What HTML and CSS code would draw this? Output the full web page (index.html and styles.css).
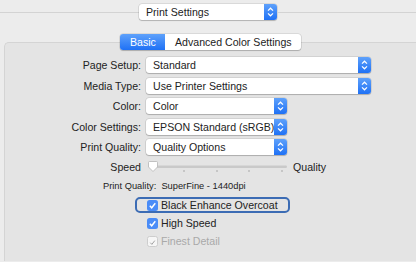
FILE: index.html
```html
<!DOCTYPE html>
<html lang="en-US">
<head>
<title>Print Settings</title>
<link rel="stylesheet" href="styles.css">
</head>
<body>
<div class="topbar">
  <span class="rule"></span>
  <div class="popup top">
    <span class="value">Print Settings</span>
    <span class="stepper"><svg width="13" height="16" viewBox="0 0 13 16"><path d="M4 6.6 L6.5 4.2 L9 6.6 M4 9.4 L6.5 11.8 L9 9.4" fill="none" stroke="#fff" stroke-width="1.2"/></svg></span>
  </div>
  <span class="rule"></span>
</div>

<div class="group">
  <div class="tabs">
    <span class="tab active">Basic</span>
    <span class="tab">Advanced Color Settings</span>
  </div>

  <div class="form">
    <span class="label">Page Setup:</span>
    <div class="popup wide">
      <span class="value">Standard</span>
      <span class="stepper"><svg width="13" height="16" viewBox="0 0 13 16"><path d="M4 6.6 L6.5 4.2 L9 6.6 M4 9.4 L6.5 11.8 L9 9.4" fill="none" stroke="#fff" stroke-width="1.2"/></svg></span>
    </div>

    <span class="label">Media Type:</span>
    <div class="popup wide">
      <span class="value">Use Printer Settings</span>
      <span class="stepper"><svg width="13" height="16" viewBox="0 0 13 16"><path d="M4 6.6 L6.5 4.2 L9 6.6 M4 9.4 L6.5 11.8 L9 9.4" fill="none" stroke="#fff" stroke-width="1.2"/></svg></span>
    </div>

    <span class="label">Color:</span>
    <div class="popup narrow">
      <span class="value">Color</span>
      <span class="stepper"><svg width="13" height="16" viewBox="0 0 13 16"><path d="M4 6.6 L6.5 4.2 L9 6.6 M4 9.4 L6.5 11.8 L9 9.4" fill="none" stroke="#fff" stroke-width="1.2"/></svg></span>
    </div>

    <span class="label">Color Settings:</span>
    <div class="popup narrow">
      <span class="value">EPSON Standard (sRGB)</span>
      <span class="stepper"><svg width="13" height="16" viewBox="0 0 13 16"><path d="M4 6.6 L6.5 4.2 L9 6.6 M4 9.4 L6.5 11.8 L9 9.4" fill="none" stroke="#fff" stroke-width="1.2"/></svg></span>
    </div>

    <span class="label">Print Quality:</span>
    <div class="popup narrow">
      <span class="value">Quality Options</span>
      <span class="stepper"><svg width="13" height="16" viewBox="0 0 13 16"><path d="M4 6.6 L6.5 4.2 L9 6.6 M4 9.4 L6.5 11.8 L9 9.4" fill="none" stroke="#fff" stroke-width="1.2"/></svg></span>
    </div>

    <span class="label">Speed</span>
    <div class="slider-row">
      <svg class="slider" width="141" height="14" viewBox="0 0 141 14">
        <rect x="4" y="5.5" width="137" height="2.5" rx="1.25" fill="#c9c9c9"/>
        <rect x="37.5" y="10" width="1" height="2" fill="#a8a8a8"/>
        <rect x="70.5" y="10" width="1" height="2" fill="#a8a8a8"/>
        <rect x="102.5" y="10" width="1" height="2" fill="#a8a8a8"/>
        <rect x="135.5" y="10" width="1" height="2" fill="#a8a8a8"/>
        <path d="M2.5 2.5 Q2.5 1.5 3.5 1.5 L10.5 1.5 Q11.5 1.5 11.5 2.5 L11.5 7 L7 11.5 L2.5 7 Z" fill="#fff" stroke="#b4b4b4" stroke-width="0.8"/>
      </svg>
      <span class="end-label">Quality</span>
    </div>
  </div>

  <p class="info">Print Quality:&nbsp; SuperFine - 1440dpi</p>

  <div class="checks">
    <div class="check focused">
      <span class="box on"><svg width="11" height="11" viewBox="0 0 11 11"><path d="M2.8 5.7 L4.7 7.8 L8.3 3.2" fill="none" stroke="#fff" stroke-width="1.4"/></svg></span>
      <span>Black Enhance Overcoat</span>
    </div>
    <div class="check">
      <span class="box on"><svg width="11" height="11" viewBox="0 0 11 11"><path d="M2.8 5.7 L4.7 7.8 L8.3 3.2" fill="none" stroke="#fff" stroke-width="1.4"/></svg></span>
      <span>High Speed</span>
    </div>
    <div class="check disabled">
      <span class="box off"><svg width="11" height="11" viewBox="0 0 11 11"><path d="M2.8 5.7 L4.7 7.8 L8.3 3.2" fill="none" stroke="#a0a0a0" stroke-width="1.2"/></svg></span>
      <span>Finest Detail</span>
    </div>
  </div>
</div>
</body>
</html>
```

FILE: styles.css
```css
body {
	margin: 0;
	background-color: #ececec;
	font-family: "Liberation Sans", Arial, sans-serif;
	font-size: 10.6px;
	color: #222;
	overflow: hidden;
	height: 262px;
	}

.topbar {
	display: flex;
	align-items: center;
	padding-top: 4px;
	}
.rule {
	flex: 1;
	height: 1px;
	background-color: #d3d3d3;
	}

.popup {
	display: flex;
	align-items: center;
	height: 16px;
	background-color: #fff;
	border-radius: 3px;
	box-shadow: 0 0 0 0.5px rgba(0,0,0,0.16), 0 1px 1px rgba(0,0,0,0.18);
	box-sizing: border-box;
	}
.popup .value {
	flex: 1;
	padding-left: 7px;
	white-space: nowrap;
	overflow: hidden;
	}
.popup .stepper {
	display: flex;
	width: 13px;
	height: 16px;
	border-radius: 0 3px 3px 0;
	background: linear-gradient(#5ea1fb, #1f71f5);
	}
.popup.top {
	width: 138px;
	}
.popup.wide {
	width: 225px;
	}
.popup.narrow {
	width: 141px;
	}

.group {
	margin: 22px 0 0 4px;
	width: 420px;
	height: 218px;
	border: 1px solid #d4d4d4;
	border-right: none;
	border-bottom: none;
	border-radius: 5px 0 0 0;
	background-color: #e4e4e4;
	}

.tabs {
	display: flex;
	width: fit-content;
	height: 16px;
	margin: -9px 0 0 115px;
	background-color: #fff;
	border-radius: 3px;
	box-shadow: 0 0 0 0.5px rgba(0,0,0,0.16), 0 1px 1px rgba(0,0,0,0.18);
	}
.tab {
	display: flex;
	align-items: center;
	padding: 0 9px 0 10px;
	}
.tab.active {
	padding: 0 9px 0 10px;
	width: 26px;
	color: #fff;
	border-radius: 3px 0 0 3px;
	background: linear-gradient(#5ea1fb, #1f71f5);
	}

.form {
	display: grid;
	grid-template-columns: 136px auto;
	column-gap: 5px;
	row-gap: 4.5px;
	align-items: center;
	margin-top: 7px;
	}
.label {
	text-align: right;
	white-space: nowrap;
	}
.slider-row {
	display: flex;
	align-items: center;
	height: 14px;
	}
.end-label {
	margin-left: 6px;
	}

.info {
	margin: 6.5px 0 0 98px;
	height: 12px;
	line-height: 12px;
	font-size: 9.3px;
	}

.checks {
	display: flex;
	flex-direction: column;
	gap: 2px;
	width: fit-content;
	margin: 5px 0 0 130px;
	}
.check {
	display: flex;
	align-items: center;
	gap: 3px;
	height: 16px;
	padding: 0 10px;
	border: 2px solid transparent;
	border-radius: 5px;
	box-sizing: border-box;
	}
.check.focused {
	border-color: #3c6cb4;
	}
.check.disabled {
	color: #a9a9a9;
	}
.box {
	display: flex;
	width: 11px;
	height: 11px;
	border-radius: 2.5px;
	box-sizing: border-box;
	}
.box.on {
	background-color: #4a8cf7;
	}
.box.off {
	background-color: #f6f6f6;
	border: 0.5px solid #cdcdcd;
	}
```
